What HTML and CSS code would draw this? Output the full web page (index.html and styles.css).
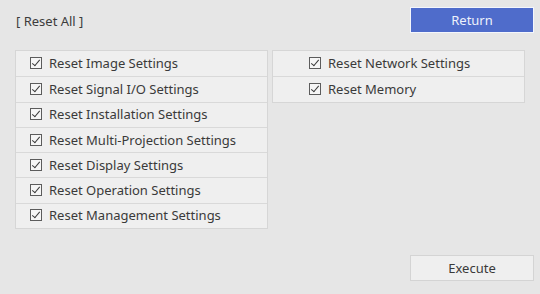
FILE: index.html
```html
<!DOCTYPE html>
<html lang="en">
<head>
    <meta charset="utf-8">
    <title>Reset All</title>
    <meta name="viewport" content="width=device-width, initial-scale=1">
    <link rel="stylesheet" href="styles.css">
</head>
<body>
    <div class="screen">
        <div class="header">
            <span class="title">[ Reset All ]</span>
            <button class="btn btn-return">Return</button>
        </div>

        <div class="panels">
            <ul class="panel">
                <li class="item"><span class="check"></span>Reset Image Settings</li>
                <li class="item"><span class="check"></span>Reset Signal I/O Settings</li>
                <li class="item"><span class="check"></span>Reset Installation Settings</li>
                <li class="item"><span class="check"></span>Reset Multi-Projection Settings</li>
                <li class="item"><span class="check"></span>Reset Display Settings</li>
                <li class="item"><span class="check"></span>Reset Operation Settings</li>
                <li class="item"><span class="check"></span>Reset Management Settings</li>
            </ul>
            <ul class="panel panel-right">
                <li class="item"><span class="check"></span>Reset Network Settings</li>
                <li class="item"><span class="check"></span>Reset Memory</li>
            </ul>
        </div>

        <div class="footer">
            <button class="btn btn-execute">Execute</button>
        </div>
    </div>
</body>
</html>
```

FILE: styles.css
```css
* {
    margin: 0;
    padding: 0;
    box-sizing: border-box;
}

body {
    font-family: 'Noto Sans', 'Open Sans', sans-serif;
    background: #e6e6e6;
    color: #3a3a3a;
    width: 540px;
    height: 294px;
    overflow: hidden;
}

.screen {
    display: flex;
    flex-direction: column;
    height: 100%;
    padding: 7px 6px 0 15px;
}

.header {
    display: flex;
    justify-content: space-between;
    align-items: center;
    height: 26px;
}

.title {
    font-size: 13px;
    color: #3c3c3c;
    padding-left: 1px;
    padding-top: 2px;
}

.btn {
    font-family: inherit;
    font-size: 13px;
    width: 124px;
    height: 26px;
    cursor: pointer;
}

.btn-return {
    background: #4f6ccb;
    color: #eef1fb;
    border: 1px solid #f4f6fc;
}

.panels {
    display: flex;
    gap: 4px;
    margin-top: 17px;
    align-items: flex-start;
}

.panel {
    list-style: none;
    width: 253px;
    border: 1px solid #d6d6d6;
    background: #efefef;
}

.item {
    display: flex;
    align-items: center;
    height: 25.3px;
    padding-left: 14px;
    padding-bottom: 1px;
    font-size: 13px;
    color: #3a3a3a;
    border-top: 1px solid #d9d9d9;
}

.item:first-child {
    border-top: none;
}

.panel-right .item {
    padding-left: 36px;
}

.check {
    position: relative;
    width: 12px;
    height: 12px;
    border: 1px solid #5c5c5c;
    background: #f6f6f6;
    margin-right: 7px;
    flex-shrink: 0;
}

.check::after {
    content: "";
    position: absolute;
    left: 3px;
    top: 0px;
    width: 3px;
    height: 7px;
    border-right: 1.5px solid #3a3a3a;
    border-bottom: 1.5px solid #3a3a3a;
    transform: rotate(40deg);
}

.footer {
    display: flex;
    justify-content: flex-end;
    margin-top: auto;
    margin-bottom: 13px;
}

.btn-execute {
    background: #efefef;
    color: #3a3a3a;
    border: 1px solid #d4d4d4;
}
```
